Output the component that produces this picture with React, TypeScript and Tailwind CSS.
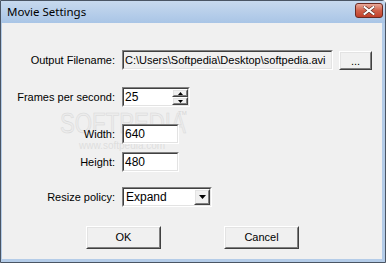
const ui = { fontFamily: '"Liberation Sans", Arial, sans-serif' };

function Sunken({ className = "", children }: { className?: string; children?: React.ReactNode }) {
  return (
    <div className={`border border-t-[#828282] border-l-[#828282] border-b-[#ffffff] border-r-[#ffffff] ${className}`}>
      <div className="h-full border border-t-[#404040] border-l-[#404040] border-b-[#e3e3e3] border-r-[#e3e3e3] flex items-center overflow-hidden">
        {children}
      </div>
    </div>
  );
}

function Raised({ className = "", children }: { className?: string; children?: React.ReactNode }) {
  return (
    <div className={`border border-t-[#ffffff] border-l-[#ffffff] border-b-[#404040] border-r-[#404040] bg-[#f0f0f0] ${className}`}>
      <div className="h-full border border-t-[#e3e3e3] border-l-[#e3e3e3] border-b-[#808080] border-r-[#808080] flex items-center justify-center">
        {children}
      </div>
    </div>
  );
}

function Row({ label, className = "", children }: { label: string; className?: string; children: React.ReactNode }) {
  return (
    <div className={`flex items-center ${className}`}>
      <span className="w-[114px] text-right pr-[1px] text-[11px] text-black">{label}</span>
      <div className="ml-[6px]">{children}</div>
    </div>
  );
}

export default function App() {
  return (
    <div className="w-[387px] h-[263px] bg-white" style={ui}>
      <div className="w-[386px] h-[263px] flex flex-col border border-[#4a5564] bg-[#b4cce8] rounded-tr-[4px]">
        {/* Title bar */}
        <div className="h-[22px] flex items-center justify-between bg-gradient-to-b from-[#c7d9ee] to-[#a9c5e6]">
          <span className="pl-[6px] text-[11.5px] text-black" style={{ fontFamily: '"Noto Sans", "Open Sans", sans-serif' }}>
            Movie Settings
          </span>
          <div className="mr-[2px] mt-[-3px] w-[28px] h-[15px] rounded-[3px] border border-[#6b2a22] bg-gradient-to-b from-[#e8a99a] via-[#d0614a] to-[#c0402a] flex items-center justify-center">
            <svg width="12" height="9" viewBox="0 0 12 9">
              <path d="M1.5 1 L10.5 8 M10.5 1 L1.5 8" stroke="#5a2a22" strokeWidth="3.2" strokeLinecap="square" />
              <path d="M1.5 1 L10.5 8 M10.5 1 L1.5 8" stroke="#ffffff" strokeWidth="2" strokeLinecap="square" />
            </svg>
          </div>
        </div>

        {/* Client area */}
        <div className="relative flex-1 ml-[1px] mr-[3px] mb-[3px] bg-[#f0f0f0] flex flex-col pt-[27px]">
          {/* watermark */}
          <div className="pointer-events-none absolute left-[58px] top-[85px] w-[140px]">
            <div className="flex items-start">
              <span
                className="block origin-left scale-x-[0.74] text-[30px] leading-none text-[#ececec] whitespace-nowrap"
                style={{ WebkitTextStroke: "0.6px #d8d8d8" }}
              >
                SOFTPEDIA
              </span>
            </div>
            <span className="absolute left-[118px] top-[1px] text-[6px] text-[#d6d6d6]">TM</span>
            <span className="absolute left-[19px] top-[30px] text-[10px] text-[#dedede] whitespace-nowrap">www.softpedia.com</span>
          </div>

          <Row label="Output Filename:" className="relative">
            <div className="flex items-center">
              <Sunken className="w-[211px] h-[20px] bg-[#f0f0f0]">
                <span className="pl-[1px] text-[11px] text-black whitespace-nowrap">C:\Users\Softpedia\Desktop\softpedia.avi</span>
              </Sunken>
              <Raised className="ml-[6px] w-[33px] h-[19px]">
                <span className="text-[11px] leading-none mt-[2px]">...</span>
              </Raised>
            </div>
          </Row>

          <Row label="Frames per second:" className="relative mt-[17px]">
            <Sunken className="w-[68px] h-[20px] bg-white">
              <span className="flex-1 pl-[1px] text-[12px] text-black">25</span>
              <div className="flex flex-col w-[16px] h-full">
                <Raised className="h-[9px]">
                  <svg width="5" height="3" viewBox="0 0 5 3"><path d="M2.5 0 L5 3 L0 3 Z" fill="#000" /></svg>
                </Raised>
                <Raised className="h-[9px]">
                  <svg width="5" height="3" viewBox="0 0 5 3"><path d="M0 0 L5 0 L2.5 3 Z" fill="#000" /></svg>
                </Raised>
              </div>
            </Sunken>
          </Row>

          <Row label="Width:" className="relative mt-[17px]">
            <Sunken className="w-[57px] h-[20px] bg-white">
              <span className="pl-[1px] text-[12px] text-black">640</span>
            </Sunken>
          </Row>

          <Row label="Height:" className="relative mt-[8px]">
            <Sunken className="w-[57px] h-[20px] bg-white">
              <span className="pl-[1px] text-[12px] text-black">480</span>
            </Sunken>
          </Row>

          <Row label="Resize policy:" className="mt-[15px]">
            <Sunken className="w-[90px] h-[20px] bg-white">
              <span className="flex-1 pl-[2px] text-[12px] text-black">Expand</span>
              <Raised className="w-[16px] h-full">
                <svg width="7" height="4" viewBox="0 0 7 4"><path d="M0 0 L7 0 L3.5 4 Z" fill="#000" /></svg>
              </Raised>
            </Sunken>
          </Row>

          <div className="flex mt-[19px] pl-[84px] gap-[63px]">
            <Raised className="w-[75px] h-[23px]">
              <span className="text-[11px] text-black">OK</span>
            </Raised>
            <Raised className="w-[75px] h-[23px]">
              <span className="text-[11px] text-black">Cancel</span>
            </Raised>
          </div>
        </div>
      </div>
    </div>
  );
}
